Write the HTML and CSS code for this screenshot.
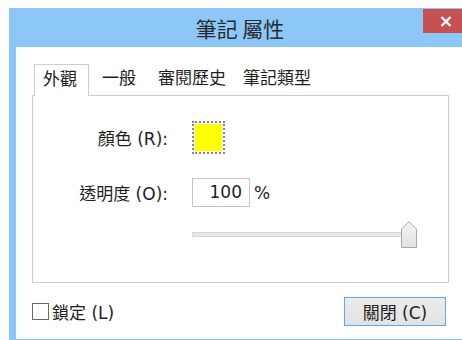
FILE: index.html
```html
<!DOCTYPE html>
<html lang="zh-Hant">
<head>
  <meta charset="UTF-8">
  <title>筆記 屬性</title>
  <link rel="stylesheet" href="styles.css">
</head>
<body>

<div class="window">
  <div class="titlebar">
    <span class="title">筆記 屬性</span>
    <span class="close">
      <svg width="12" height="11" viewBox="0 0 12 11"><path d="M1.5 1 L10.5 10 M10.5 1 L1.5 10" stroke="#fff" stroke-width="2.4"/></svg>
    </span>
  </div>

  <div class="content">
    <div class="tabs">
      <div class="tab active">外觀</div>
      <div class="tab">一般</div>
      <div class="tab">審閱歷史</div>
      <div class="tab">筆記類型</div>
    </div>

    <div class="panel">
      <div class="form">
        <label class="label">顏色 (R):</label>
        <div class="swatch"><div class="swatch-fill"></div></div>

        <label class="label spaced">透明度 (O):</label>
        <div class="opacity spaced">
          <span class="field">100</span>
          <span>%</span>
        </div>

        <span></span>
        <div class="slider">
          <div class="track"></div>
          <svg class="thumb" width="16" height="27" viewBox="0 0 16 27">
            <defs>
              <linearGradient id="thumbFill" x1="0" y1="0" x2="0" y2="1">
                <stop offset="0" stop-color="#f3f3f3"/>
                <stop offset="1" stop-color="#e3e3e3"/>
              </linearGradient>
            </defs>
            <path d="M0.5 26.5 V8 L8 0.8 L15.5 8 V26.5 Z" fill="url(#thumbFill)" stroke="#a9a9a9"/>
          </svg>
        </div>
      </div>
    </div>

    <div class="footer">
      <label class="check"><span class="box"></span>鎖定 (L)</label>
      <button class="btn">關閉 (C)</button>
    </div>
  </div>
</div>

</body>
</html>
```

FILE: styles.css
```css
html, body {
  margin: 0;
  overflow: hidden;
  background: #fff;
}
body {
  font-family: "DejaVu Sans", "Noto Sans CJK TC", sans-serif;
  font-size: 17px;
  color: #1e1e1e;
}
.window {
  margin: 8px 0 0 9px;
  width: 446px;
  padding: 0 7px 1px 7px;
  background-color: #8cc7f8;
}
.titlebar {
  position: relative;
  height: 39px;
  display: flex;
  justify-content: center;
  align-items: center;
}
.title {
  font-family: "Noto Sans CJK TC", sans-serif;
  font-size: 21px;
  color: #2a2a2a;
  margin-left: 2px;
}
.close {
  position: absolute;
  top: 1px;
  right: -7px;
  width: 46px;
  height: 24px;
  background-color: #c75050;
  display: flex;
  justify-content: center;
  align-items: center;
}
.content {
  background: #fff;
  height: 292px;
  padding-top: 17px;
  box-sizing: border-box;
}
.tabs {
  display: flex;
  align-items: flex-end;
  height: 31px;
  margin-left: 18px;
}
.tab {
  font-family: "Noto Sans CJK TC", sans-serif;
  height: 31px;
  line-height: 26px;
  box-sizing: border-box;
}
.tab.active {
  position: relative;
  z-index: 1;
  height: 32px;
  margin-bottom: -1px;
  padding: 0 11px 0 8px;
  background: #fff;
  border: 1px solid #cdcdcd;
  border-bottom: none;
}
.tab:nth-child(2) { margin-left: 13px; }
.tab:nth-child(3) { margin-left: 22px; }
.tab:nth-child(4) { margin-left: 17px; }
.panel {
  margin-left: 16px;
  width: 417px;
  height: 188px;
  box-sizing: border-box;
  border: 1px solid #cdcdcd;
}
.form {
  display: grid;
  grid-template-columns: 135px auto;
  column-gap: 24px;
  align-items: center;
  padding-top: 25px;
}
.label {
  text-align: right;
}
.spaced {
  margin-top: 24px;
}
.swatch {
  width: 33px;
  height: 33px;
  box-sizing: border-box;
  border: 2px dotted #888;
  padding: 1px;
  background: #fff;
}
.swatch-fill {
  height: 100%;
  background: #ffff00;
}
.opacity {
  display: flex;
  align-items: center;
  gap: 4px;
}
.field {
  width: 58px;
  height: 29px;
  box-sizing: border-box;
  border: 1px solid #c4c4c4;
  text-align: right;
  padding-right: 7px;
  line-height: 26px;
}
.slider {
  display: grid;
  width: 225px;
  height: 27px;
  margin-top: 14px;
}
.track, .thumb {
  grid-area: 1 / 1;
}
.track {
  align-self: center;
  height: 5px;
  box-sizing: border-box;
  background: #e7e7e7;
  border: 1px solid #d8d8d8;
}
.thumb {
  justify-self: end;
}
.footer {
  height: 56px;
  display: flex;
  justify-content: space-between;
  align-items: center;
  padding: 0 16px;
}
.check {
  display: flex;
  align-items: center;
  gap: 3px;
}
.box {
  width: 17px;
  height: 17px;
  box-sizing: border-box;
  border: 1px solid #6a6a6a;
  background: #fff;
}
.btn {
  width: 102px;
  height: 29px;
  font-family: inherit;
  font-size: 17px;
  color: #1e1e1e;
  border: 1px solid #5ea9ea;
  background: linear-gradient(#ececec, #e2e2e2);
  padding: 0;
}
```
